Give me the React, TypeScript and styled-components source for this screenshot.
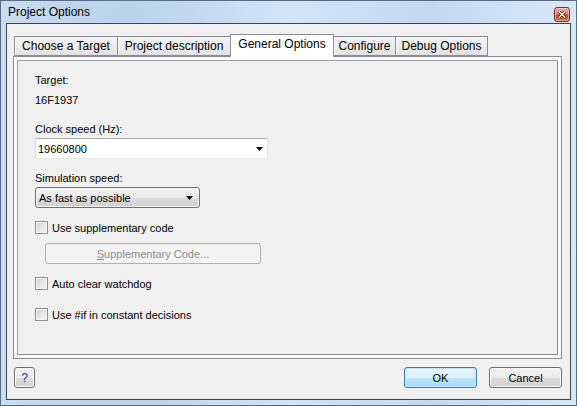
import React from "react";
import styled, { createGlobalStyle } from "styled-components";

const Global = createGlobalStyle`
  html, body { margin: 0; padding: 0; background: #ffffff; }
  * { box-sizing: border-box; }
`;

const Window = styled.div`
  width: 577px;
  height: 406px;
  border: 1px solid #5a6c82;
  background: linear-gradient(90deg, #c9dcf1 0%, #bad2ec 22%, #d2e3f5 50%, #c4d9f0 75%, #d8e7f7 100%);
  display: flex;
  flex-direction: column;
  font-family: "Liberation Sans", Arial, sans-serif;
`;

const TitleBar = styled.div`
  height: 22px;
  display: flex;
  align-items: center;
  justify-content: space-between;
  padding: 0 6px 0 7px;
`;

const Title = styled.span`
  font-size: 12px;
  color: #000;
  line-height: 15px;
  margin-top: 1px;
`;

const CloseButton = styled.div`
  width: 16px;
  height: 15px;
  margin-top: 5px;
  border: 1px solid #7a3020;
  border-radius: 3px;
  background: linear-gradient(#eab1a2 0%, #d98672 45%, #c5482f 55%, #d0705a 100%);
  box-shadow: inset 0 0 0 1px rgba(255, 220, 210, 0.55);
  display: flex;
  align-items: center;
  justify-content: center;
`;

const Client = styled.div`
  flex: 1;
  margin: 0 5px 5px 5px;
  border: 1px solid #3a4657;
  background: #f0f0f0;
  padding: 10px 0 0 6px;
  display: flex;
  flex-direction: column;
`;

const TabStrip = styled.div`
  display: flex;
  align-items: flex-end;
  height: 22px;
  padding-left: 1px;
`;

const Tab = styled.div<{ $w: number; $active?: boolean }>`
  width: ${(p) => p.$w}px;
  height: ${(p) => (p.$active ? 23 : 20)}px;
  margin-left: -1px;
  margin-bottom: ${(p) => (p.$active ? -1 : 0)}px;
  border: 1px solid #898c95;
  border-bottom: ${(p) => (p.$active ? "none" : "1px solid #898c95")};
  background: ${(p) =>
    p.$active ? "#ffffff" : "linear-gradient(#f4f4f4 0%, #ececec 50%, #e2e2e2 100%)"};
  box-shadow: ${(p) => (p.$active ? "none" : "inset 1px 1px 0 #fbfbfb")};
  position: relative;
  z-index: ${(p) => (p.$active ? 2 : 1)};
  display: flex;
  align-items: ${(p) => (p.$active ? "flex-start" : "center")};
  padding-top: ${(p) => (p.$active ? 2 : 0)}px;
  justify-content: center;
  font-size: 12px;
  color: #000;
  white-space: nowrap;
  &:first-child {
    margin-left: 0;
  }
`;

const Page = styled.div`
  width: 549px;
  height: 303px;
  border: 1px solid #898c95;
  background: #fbfbfb;
  padding: 3px;
`;

const Frame = styled.div`
  height: 100%;
  border: 1px solid #a0a0a0;
  border-right-color: #8a8a8a;
  border-bottom-color: #8a8a8a;
  background: #f0f0f0;
  padding-left: 17px;
  display: flex;
  flex-direction: column;
  align-items: flex-start;
`;

const Label = styled.div<{ $gap: number }>`
  margin-top: ${(p) => p.$gap}px;
  font-size: 11px;
  line-height: 13px;
  color: #000;
`;

const ComboEdit = styled.div`
  margin-top: 2px;
  width: 233px;
  height: 21px;
  background: #ffffff;
  border: 1px solid;
  border-color: #abadb3 #e2e3ea #e3e9ef #dbdfe6;
  display: flex;
  align-items: center;
  justify-content: space-between;
  padding: 0 4px 0 2px;
  font-size: 11px;
  color: #000;
`;

const DropList = styled.div`
  margin-top: 2px;
  width: 165px;
  height: 21px;
  border: 1px solid #707070;
  border-radius: 3px;
  background: linear-gradient(#f2f2f2 0%, #ebebeb 50%, #dddddd 51%, #cfcfcf 100%);
  box-shadow: inset 0 0 0 1px #f8f8f8;
  display: flex;
  align-items: center;
  justify-content: space-between;
  padding: 0 6px 0 3px;
  font-size: 11px;
  color: #000;
`;

const CheckRow = styled.div<{ $gap: number }>`
  margin-top: ${(p) => p.$gap}px;
  display: flex;
  align-items: center;
  gap: 4px;
  height: 13px;
  font-size: 11px;
  color: #000;
`;

const CheckBox = styled.div`
  width: 13px;
  height: 13px;
  border: 1px solid #8e8f8f;
  background: linear-gradient(135deg, #cfd1d4 0%, #e6e7e8 55%, #f7f7f7 100%);
  box-shadow: inset 0 0 0 1px #f4f4f4;
`;

const DisabledButton = styled.div`
  margin-top: 9px;
  margin-left: 10px;
  width: 216px;
  height: 21px;
  border: 1px solid #adb2b5;
  border-radius: 3px;
  background: #f4f4f4;
  color: #8d8d8d;
  font-size: 11px;
  display: flex;
  align-items: center;
  justify-content: center;
  u {
    text-decoration: underline;
  }
`;

const Footer = styled.div`
  width: 549px;
  margin-top: 8px;
  padding-left: 1px;
  display: flex;
  justify-content: space-between;
`;

const ButtonGroup = styled.div`
  display: flex;
  gap: 12px;
`;

const Button = styled.div<{ $w: number; $default?: boolean }>`
  width: ${(p) => p.$w}px;
  height: 21px;
  border: 1px solid ${(p) => (p.$default ? "#3c7fb1" : "#707070")};
  border-radius: 3px;
  background: ${(p) =>
    p.$default
      ? "linear-gradient(#eaf6fd 0%, #d9f0fc 50%, #bee6fd 51%, #a7d9f5 100%)"
      : "linear-gradient(#f2f2f2 0%, #ebebeb 50%, #dddddd 51%, #cfcfcf 100%)"};
  box-shadow: inset 0 0 0 1px ${(p) => (p.$default ? "#c5e6f8" : "#fbfbfb")};
  display: flex;
  align-items: center;
  justify-content: center;
  font-size: 11px;
  color: #000;
`;

const HelpGlyph = styled.span`
  color: #1d56a6;
  font-size: 12px;
  font-family: "Liberation Sans", Arial, sans-serif;
  text-shadow: 0.6px 0 0 rgba(200, 130, 40, 0.55);
`;

const Arrow = () => (
  <svg width="7" height="4" viewBox="0 0 7 4">
    <polygon points="0,0 7,0 3.5,4" fill="#000" />
  </svg>
);

const tabs = [
  { label: "Choose a Target", w: 104 },
  { label: "Project description", w: 114 },
  { label: "General Options", w: 104, active: true },
  { label: "Configure", w: 63 },
  { label: "Debug Options", w: 93 },
];

export default function App() {
  return (
    <>
      <Global />
      <Window>
        <TitleBar>
          <Title>Project Options</Title>
          <CloseButton>
            <svg width="8" height="7" viewBox="0 0 8 7">
              <path d="M1 0.5 L7 6.5 M7 0.5 L1 6.5" stroke="#3b1208" strokeWidth="2.6" />
              <path d="M1 0.5 L7 6.5 M7 0.5 L1 6.5" stroke="#ffffff" strokeWidth="1.4" />
            </svg>
          </CloseButton>
        </TitleBar>
        <Client>
          <TabStrip>
            {tabs.map((t) => (
              <Tab key={t.label} $w={t.w} $active={t.active}>
                {t.label}
              </Tab>
            ))}
          </TabStrip>
          <Page>
            <Frame>
              <Label $gap={13}>Target:</Label>
              <Label $gap={7}>16F1937</Label>
              <Label $gap={16}>Clock speed (Hz):</Label>
              <ComboEdit>
                <span>19660800</span>
                <Arrow />
              </ComboEdit>
              <Label $gap={13}>Simulation speed:</Label>
              <DropList>
                <span>As fast as possible</span>
                <Arrow />
              </DropList>
              <CheckRow $gap={13}>
                <CheckBox />
                <span>Use supplementary code</span>
              </CheckRow>
              <DisabledButton>
                <span>
                  <u>S</u>upplementary Code...
                </span>
              </DisabledButton>
              <CheckRow $gap={13}>
                <CheckBox />
                <span>Auto clear watchdog</span>
              </CheckRow>
              <CheckRow $gap={18}>
                <CheckBox />
                <span>Use #if in constant decisions</span>
              </CheckRow>
            </Frame>
          </Page>
          <Footer>
            <Button $w={21}>
              <HelpGlyph>?</HelpGlyph>
            </Button>
            <ButtonGroup>
              <Button $w={73} $default>
                OK
              </Button>
              <Button $w={73}>Cancel</Button>
            </ButtonGroup>
          </Footer>
        </Client>
      </Window>
    </>
  );
}
